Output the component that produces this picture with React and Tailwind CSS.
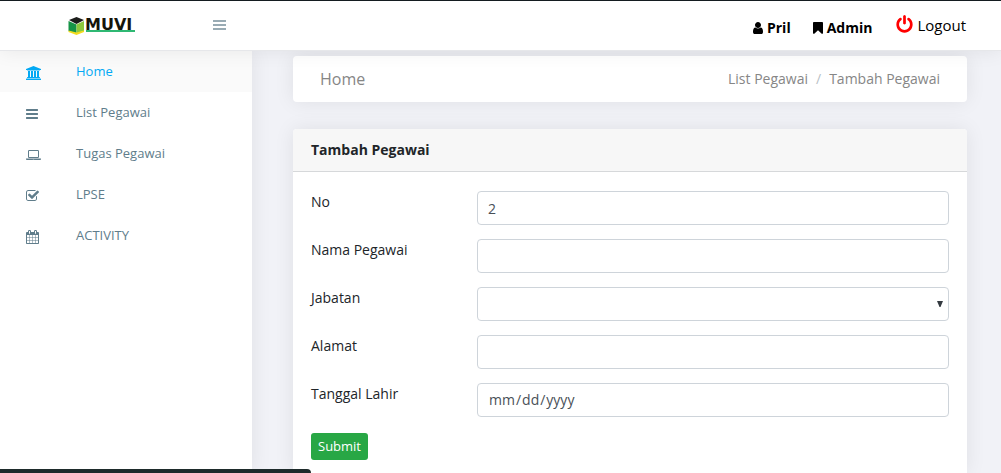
import React from "react";

const icons = {
  university: {
    w: 1920,
    d: "M960 0l960 384v128h-128q0 26-20.5 45t-48.5 19h-1526q-28 0-48.5-19t-20.5-45h-128v-128zm-704 640h256v768h128v-768h256v768h128v-768h256v768h128v-768h256v768h59q28 0 48.5 19t20.5 45v64h-1664v-64q0-26 20.5-45t48.5-19h59v-768zm1595 960q28 0 48.5 19t20.5 45v128h-1920v-128q0-26 20.5-45t48.5-19h1782z",
  },
  bars: {
    x: 128,
    w: 1536,
    d: "M1664 1344v128q0 26-19 45t-45 19h-1408q-26 0-45-19t-19-45v-128q0-26 19-45t45-19h1408q26 0 45 19t19 45zm0-512v128q0 26-19 45t-45 19h-1408q-26 0-45-19t-19-45v-128q0-26 19-45t45-19h1408q26 0 45 19t19 45zm0-512v128q0 26-19 45t-45 19h-1408q-26 0-45-19t-19-45v-128q0-26 19-45t45-19h1408q26 0 45 19t19 45z",
  },
  laptop: {
    w: 1920,
    d: "M416 1280q-66 0-113-47t-47-113v-704q0-66 47-113t113-47h1088q66 0 113 47t47 113v704q0 66-47 113t-113 47h-1088zm-32-864v704q0 13 9.500 22.500t22.500 9.500h1088q13 0 22.500-9.500t9.500-22.500v-704q0-13-9.500-22.500t-22.500-9.500h-1088q-13 0-22.500 9.500t-9.500 22.500zm1376 928h160v96q0 40-47 68t-113 28h-1600q-66 0-113-28t-47-68v-96h1760zm-720 96q16 0 16-16t-16-16h-160q-16 0-16 16t16 16h160z",
  },
  check: {
    x: 64,
    w: 1664,
    d: "M1472 930v318q0 119-84.5 203.5t-203.5 84.5h-832q-119 0-203.5-84.5t-84.5-203.5v-832q0-119 84.5-203.5t203.5-84.5h832q63 0 117 25 15 7 18 23 3 17-9 29l-49 49q-10 10-23 10-3 0-9-2-23-6-45-6h-832q-66 0-113 47t-47 113v832q0 66 47 113t113 47h832q66 0 113-47t47-113v-254q0-13 9-22l64-64q10-10 23-10 6 0 12 3 20 8 20 29zm231-489l-814 814q-24 24-57 24t-57-24l-430-430q-24-24-24-57t24-57l110-110q24-24 57-24t57 24l263 263 647-647q24-24 57-24t57 24l110 110q24 24 24 57t-24 57z",
  },
  calendar: {
    x: 64,
    w: 1664,
    d: "M192 1664h288v-288h-288v288zm352 0h320v-288h-320v288zm-352-352h288v-320h-288v320zm352 0h320v-320h-320v320zm-352-384h288v-288h-288v288zm736 736h320v-288h-320v288zm-384-736h320v-288h-320v288zm768 736h288v-288h-288v288zm-384-352h320v-320h-320v320zm-352-864v-288q0-13-9.5-22.5t-22.5-9.5h-64q-13 0-22.5 9.5t-9.5 22.5v288q0 13 9.5 22.5t22.5 9.5h64q13 0 22.5-9.5t9.5-22.5zm736 864h288v-320h-288v320zm-384-384h320v-288h-320v288zm384 0h288v-288h-288v288zm32-480v-288q0-13-9.5-22.5t-22.5-9.5h-64q-13 0-22.5 9.5t-9.5 22.5v288q0 13 9.5 22.5t22.5 9.5h64q13 0 22.5-9.5t9.5-22.5zm384-64v1280q0 52-38 90t-90 38h-1408q-52 0-90-38t-38-90v-1280q0-52 38-90t90-38h128v-96q0-66 47-113t113-47h64q66 0 113 47t47 113v96h384v-96q0-66 47-113t113-47h64q66 0 113 47t47 113v96h128q52 0 90 38t38 90z",
  },
  user: {
    x: 256,
    w: 1280,
    d: "M1536 1399q0 109-62.5 187t-150.5 78h-854q-88 0-150.5-78t-62.5-187q0-85 8.5-160.5t31.5-152 58.5-131 94-89 134.5-34.5q131 128 313 128t313-128q76 0 134.5 34.5t94 89 58.5 131 31.5 152 8.5 160.5zm-256-887q0 159-112.5 271.5t-271.5 112.5-271.5-112.5-112.5-271.5 112.5-271.5 271.5-112.5 271.5 112.5 112.5 271.5z",
  },
  bookmark: {
    x: 256,
    w: 1280,
    d: "M1420 128q23 0 44 9 33 13 52.5 41t19.5 62v1289q0 34-19.5 62t-52.5 41q-19 8-44 8-48 0-83-32l-441-424-441 424q-36 33-83 33-23 0-44-9-33-13-52.5-41t-19.5-62v-1289q0-34 19.5-62t52.5-41q21-9 44-9h1048z",
  },
  power: {
    x: 128,
    w: 1536,
    d: "M1664 896q0 156-61 298t-164 245-245 164-298 61-298-61-245-164-164-245-61-298q0-182 80.5-343t226.5-270q43-32 95.5-25t83.5 50q32 42 24.500 94.500t-49.500 84.500q-98 74-151.500 181t-53.500 228q0 104 40.500 198.500t109.500 163.500 163.500 109.500 198.500 40.500 198.500-40.500 163.500-109.500 109.500-163.500 40.500-198.500q0-121-53.500-228t-151.500-181q-42-32-49.500-84.500t24.500-94.500q31-43 84-50t95 25q146 109 226.500 270t80.500 343zm-640-768v640q0 52-38 90t-90 38-90-38-38-90v-640q0-52 38-90t90-38 90 38 38 90z",
  },
};

function Icon({ name, className }) {
  const { x = 0, w, d } = icons[name];
  return (
    <svg viewBox={`${x} 0 ${w} 1792`} className={className} fill="currentColor" aria-hidden="true">
      <path d={d} />
    </svg>
  );
}

function Logo() {
  return (
    <svg viewBox="0 0 68 20" className="h-5 w-[68px]" role="img" aria-label="MUVI">
      <path d="M0.500 5 8.500 8.500V17.500L0.500 15Z" fill="#169447" />
      <path d="M8.500 8.500 16 5V15L8.500 17.500Z" fill="#8cc83c" />
      <path d="M1 4 8.500 1 16 4 8.500 8Z" fill="#1c1d1b" />
      <path d="M0.500 14.500 8.500 16.500 16 14.500V16L8.500 19 0.500 16Z" fill="#f3dc1e" />
      <text x="17" y="14" fontFamily="DejaVu Sans, sans-serif" fontWeight="700" fontSize="16" fill="#15140a">
        MUVI
      </text>
      <path d="M18 14H67V16H18Z" fill="#2fb873" />
    </svg>
  );
}

const menu = [
  { icon: "university", label: "Home", active: true, size: "w-[15px]" },
  { icon: "bars", label: "List Pegawai", size: "w-[12px]" },
  { icon: "laptop", label: "Tugas Pegawai", size: "w-[15px]" },
  { icon: "check", label: "LPSE", size: "w-[13px]" },
  { icon: "calendar", label: "ACTIVITY", size: "w-[13px]" },
];

function Header() {
  return (
    <header className="relative z-20 flex h-[51px] items-center border-t border-b border-t-[#141c20] border-b-[#e6e7ea] bg-white shadow-[0_0_20px_rgba(0,0,0,0.08)]">
      <div className="flex w-[252px] items-center justify-between pr-[26px] pl-[68px]">
        <a href="#home">
          <Logo />
        </a>
        <button type="button" aria-label="Toggle menu" className="-mt-[2px] text-[#99abb4]">
          <svg viewBox="0 0 13 10" className="h-[10px] w-[13px]" fill="currentColor" aria-hidden="true">
            <path d="M0 0H13V2H0ZM0 4H13V6H0ZM0 8H13V10H0Z" />
          </svg>
        </button>
      </div>
      <nav className="ml-auto flex items-center pr-[35px] text-black">
        <a href="#profile" className="mt-1 flex items-center gap-1 text-sm font-bold">
          <Icon name="user" className="h-[14px] w-[10px]" />
          Pril
        </a>
        <a href="#admin" className="mt-1 ml-[22px] flex items-center gap-1 text-sm font-bold">
          <Icon name="bookmark" className="h-[14px] w-[10px]" />
          Admin
        </a>
        <a href="#logout" className="ml-6 flex items-center gap-1 text-[15px]">
          <Icon name="power" className="mb-[2px] h-[19px] w-[17px] text-[#ff0000]" />
          Logout
        </a>
      </nav>
    </header>
  );
}

function Sidebar() {
  return (
    <aside className="w-[252px] shrink-0 bg-white shadow-[0_0_20px_rgba(0,0,0,0.08)]">
      <nav>
        {menu.map((m) => (
          <a
            key={m.label}
            href={"#" + m.label.toLowerCase().replace(" ", "-")}
            className={
              "flex h-[41px] items-center pl-[26px] text-[13px] " +
              (m.active ? "bg-[#fafafa] text-[#03a9f4]" : "text-[#607d8b]")
            }
          >
            <span className="flex w-[50px] pt-[2px]">
              <Icon name={m.icon} className={"h-[14px] " + m.size} />
            </span>
            {m.label}
          </a>
        ))}
      </nav>
    </aside>
  );
}

const control =
  "block h-[34px] w-full rounded border border-[#ced4da] bg-white px-[10px] text-sm text-[#495057] outline-none focus:border-[#80bdff]";

function Field({ id, label, children }) {
  return (
    <div className="grid grid-cols-[166px_1fr]">
      <label htmlFor={id} className="text-sm leading-[21px] text-[#212529]">
        {label}
      </label>
      {children}
    </div>
  );
}

function EmployeeForm() {
  return (
    <section className="flex grow flex-col rounded-t bg-white shadow-[0_0_20px_rgba(0,0,0,0.08)]">
      <h2 className="flex h-[43px] items-center rounded-t border-b border-[#d6d8da] bg-[#f7f7f7] px-[18px] text-sm font-bold text-[#212529]">
        Tambah Pegawai
      </h2>
      <form className="flex flex-col gap-[14px] px-[18px] pt-[19px]" onSubmit={(e) => e.preventDefault()}>
        <Field id="no" label="No">
          <input id="no" type="text" defaultValue="2" className={control} />
        </Field>
        <Field id="nama" label="Nama Pegawai">
          <input id="nama" type="text" className={control} />
        </Field>
        <Field id="jabatan" label="Jabatan">
          <div className="relative">
            <select id="jabatan" defaultValue="" className={control + " appearance-none"}>
              <option value=""></option>
            </select>
            <svg
              viewBox="0 0 6 6"
              className="pointer-events-none absolute top-[14px] right-[6px] size-[6px]"
              fill="#343a40"
              aria-hidden="true"
            >
              <path d="M0 0H6L3.500 6H2.500Z" />
            </svg>
          </div>
        </Field>
        <Field id="alamat" label="Alamat">
          <input id="alamat" type="text" className={control} />
        </Field>
        <Field id="lahir" label="Tanggal Lahir">
          <input
            id="lahir"
            type="date"
            className={control + " [&::-webkit-calendar-picker-indicator]:hidden"}
          />
        </Field>
        <button
          type="submit"
          className="mt-[2px] h-[27px] self-start rounded-[3px] bg-[#28a745] px-[7px] text-[13px] leading-[25px] text-white"
        >
          Submit
        </button>
      </form>
    </section>
  );
}

export default function App() {
  return (
    <div className="flex min-h-screen flex-col bg-[#f1f2f7] font-['Open_Sans','Noto_Sans',sans-serif]">
      <Header />
      <div className="flex grow">
        <Sidebar />
        <main className="flex min-w-0 grow flex-col gap-[27px] pt-[5px] pr-[34px] pl-[41px]">
          <div className="flex h-[46px] shrink-0 items-center justify-between rounded bg-white px-[27px] text-[#868686] shadow-[0_0_20px_rgba(0,0,0,0.08)]">
            <h1 className="text-base">Home</h1>
            <nav aria-label="Breadcrumb">
              <ol className="flex text-sm">
                <li>
                  <a href="#list-pegawai">List Pegawai</a>
                </li>
                <li className="px-2 text-[#b9bfc6]">/</li>
                <li>Tambah Pegawai</li>
              </ol>
            </nav>
          </div>
          <EmployeeForm />
        </main>
      </div>
      <div className="fixed bottom-0 left-0 z-30 h-1 w-[311px] rounded-tr bg-[#1e2b2b]" />
    </div>
  );
}
